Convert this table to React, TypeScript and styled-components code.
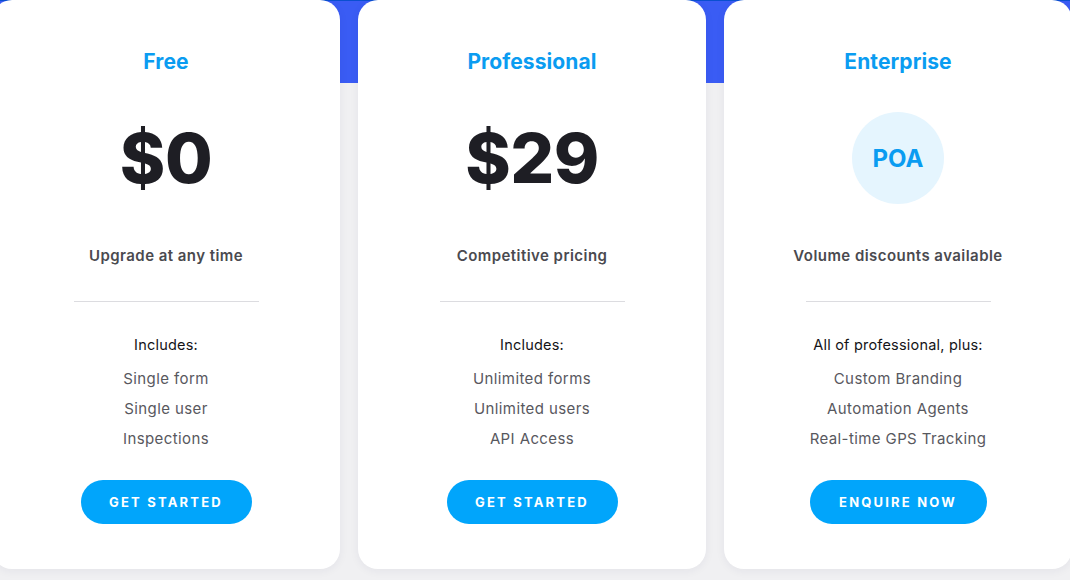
import React from "react";
import styled, { createGlobalStyle } from "styled-components";

const Global = createGlobalStyle`
  html, body { margin: 0; padding: 0; }
  body {
    width: 1070px;
    height: 580px;
    overflow: hidden;
    font-family: Inter, "Open Sans", Arial, sans-serif;
    background: linear-gradient(to bottom, #3a5cf4 0px, #3a5cf4 83px, #f0f0f2 83px, #f0f0f2 100%);
  }
`;

const Page = styled.main`
  border-top: 1px solid #0a4fd0;
  box-sizing: border-box;
  height: 580px;
`;

const Row = styled.div`
  display: flex;
  gap: 18px;
  width: 1080px;
  margin-left: -8px;
  margin-top: -1px;
`;

const Card = styled.section`
  width: 348px;
  height: 569px;
  box-sizing: border-box;
  background: #ffffff;
  border-radius: 20px;
  box-shadow: 0 2px 10px rgba(30, 40, 80, 0.06);
  display: flex;
  flex-direction: column;
  align-items: center;
  padding-top: 50px;
`;

const Title = styled.h2`
  margin: 0;
  font-size: 21px;
  line-height: 24px;
  font-weight: 700;
  color: #0a9cf1;
  letter-spacing: 0.1px;
`;

const PriceBox = styled.div`
  margin-top: 34px;
  height: 100px;
  display: flex;
  align-items: center;
  justify-content: center;
`;

const Price = styled.div`
  font-size: 69px;
  line-height: 100px;
  font-weight: 800;
  color: #1e1e24;
  letter-spacing: -0.5px;
`;

const Bubble = styled.div`
  width: 92px;
  height: 92px;
  border-radius: 50%;
  background: #e5f5fe;
  display: flex;
  align-items: center;
  justify-content: center;
  font-size: 24px;
  font-weight: 700;
  color: #0a9cf1;
`;

const Subtitle = styled.p`
  margin: 38px 0 0;
  font-size: 15px;
  line-height: 20px;
  font-weight: 600;
  color: #4a4a4f;
  letter-spacing: 0.45px;
`;

const Divider = styled.hr`
  margin: 35px 0 0;
  width: 185px;
  height: 1px;
  border: 0;
  background: #dcdce0;
`;

const Includes = styled.p`
  margin: 32px 0 0;
  font-size: 14.5px;
  line-height: 22px;
  font-weight: 400;
  color: #141418;
  letter-spacing: 0.2px;
`;

const List = styled.ul`
  margin: 8px 0 0;
  padding: 0;
  list-style: none;
  text-align: center;
`;

const Item = styled.li`
  font-size: 15px;
  line-height: 30px;
  color: #58585e;
  letter-spacing: 0.4px;
`;

const Button = styled.button`
  margin-top: 26px;
  height: 44px;
  width: ${(p: { $w: number }) => p.$w}px;
  border: 0;
  border-radius: 22px;
  background: #01a5fb;
  color: #ffffff;
  font-family: inherit;
  font-size: 13px;
  font-weight: 700;
  letter-spacing: 2.2px;
  cursor: pointer;
`;

type Plan = {
  name: string;
  price?: string;
  subtitle: string;
  includes: string;
  items: string[];
  cta: string;
  ctaWidth: number;
};

const plans: Plan[] = [
  {
    name: "Free",
    price: "$0",
    subtitle: "Upgrade at any time",
    includes: "Includes:",
    items: ["Single form", "Single user", "Inspections"],
    cta: "GET STARTED",
    ctaWidth: 171,
  },
  {
    name: "Professional",
    price: "$29",
    subtitle: "Competitive pricing",
    includes: "Includes:",
    items: ["Unlimited forms", "Unlimited users", "API Access"],
    cta: "GET STARTED",
    ctaWidth: 171,
  },
  {
    name: "Enterprise",
    subtitle: "Volume discounts available",
    includes: "All of professional, plus:",
    items: ["Custom Branding", "Automation Agents", "Real-time GPS Tracking"],
    cta: "ENQUIRE NOW",
    ctaWidth: 177,
  },
];

export default function App() {
  return (
    <Page>
      <Global />
      <Row>
        {plans.map((p) => (
          <Card key={p.name}>
            <Title>{p.name}</Title>
            <PriceBox>
              {p.price ? <Price>{p.price}</Price> : <Bubble>POA</Bubble>}
            </PriceBox>
            <Subtitle>{p.subtitle}</Subtitle>
            <Divider />
            <Includes>{p.includes}</Includes>
            <List>
              {p.items.map((i) => (
                <Item key={i}>{i}</Item>
              ))}
            </List>
            <Button $w={p.ctaWidth}>{p.cta}</Button>
          </Card>
        ))}
      </Row>
    </Page>
  );
}
